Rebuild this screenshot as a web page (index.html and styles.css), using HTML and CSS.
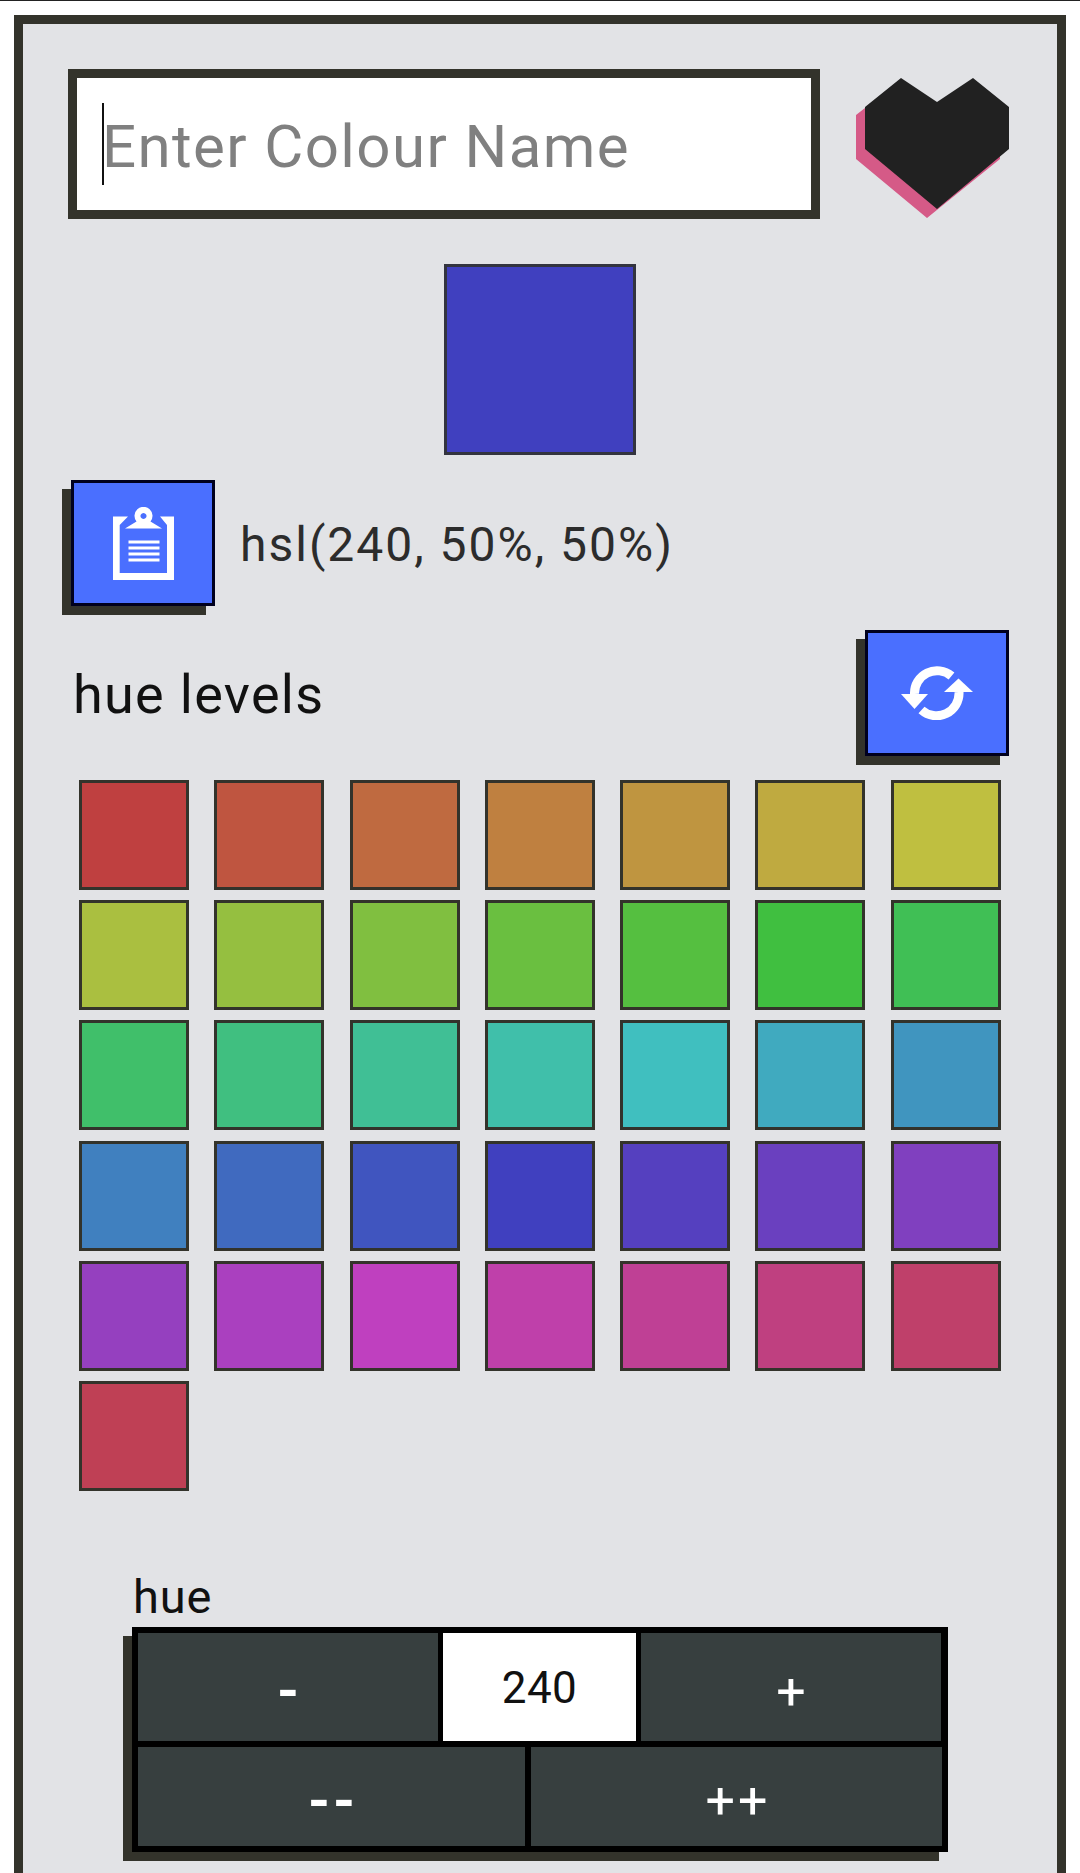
FILE: index.html
```html
<!DOCTYPE html>
<html lang="en">
<head>
    <meta charset="UTF-8">
    <meta name="viewport" content="width=device-width, initial-scale=1.0">
    <title>Colour Picker</title>
    <link rel="stylesheet" href="styles.css">
</head>
<body>
    <div class="panel">
        <!-- Name input and favourite -->
        <div class="header">
            <div class="name-box">
                <input class="name-input" type="text" placeholder="Enter Colour Name">
                <span class="caret"></span>
            </div>
            <svg class="heart" viewBox="0 0 153 141" aria-hidden="true">
                <polygon fill="#d55a87" points="36,9 71,33 107,9 144,37 144,81 71,140 0,81 0,37"/>
                <polygon fill="#212121" points="45,0 81,24 117,0 153,29 153,71 81,131 9,71 9,29"/>
            </svg>
        </div>

        <div class="preview"></div>

        <div class="copy-row">
            <button class="icon-btn" type="button" aria-label="Copy">
                <svg class="icon-clip" viewBox="0 0 61 73" aria-hidden="true">
                    <path fill="#fff" fill-rule="evenodd" d="M0 9.5H15L6.7 18V66H54V18L47 9.5H61V73H0Z"/>
                    <path fill="#fff" fill-rule="evenodd" d="M12 21.5L23.500 14.500A9 9 0 1 1 37.500 14.500L49 21.5ZM30.500 6a3 3 0 1 0 0.01 0Z"/>
                    <rect fill="#fff" x="15.500" y="33.500" width="31" height="3"/>
                    <rect fill="#fff" x="15.500" y="39.500" width="31" height="3"/>
                    <rect fill="#fff" x="15.500" y="45.500" width="31" height="3"/>
                    <rect fill="#fff" x="15.500" y="51.500" width="31" height="3"/>
                </svg>
            </button>
            <span class="hsl-text">hsl(240, 50%, 50%)</span>
        </div>

        <div class="levels-row">
            <span class="levels-title">hue levels</span>
            <button class="icon-btn" type="button" aria-label="Refresh">
                <svg class="icon-sync" viewBox="0 0 72 54" aria-hidden="true">
                    <path fill="none" stroke="#fff" stroke-width="9" d="M13.500 28A22.500 22.500 0 0 1 50.500 10"/>
                    <path fill="none" stroke="#fff" stroke-width="9" d="M58 26A22.500 22.500 0 0 1 20.500 44"/>
                    <polygon fill="#fff" points="0,28 27,28 13.500,43"/>
                    <polygon fill="#fff" points="57.500,12.500 72,26 43,26"/>
                </svg>
            </button>
        </div>

        <div class="swatches">
            <div class="swatch" style="background:hsl(0,50%,50%)"></div>
            <div class="swatch" style="background:hsl(10,50%,50%)"></div>
            <div class="swatch" style="background:hsl(20,50%,50%)"></div>
            <div class="swatch" style="background:hsl(30,50%,50%)"></div>
            <div class="swatch" style="background:hsl(40,50%,50%)"></div>
            <div class="swatch" style="background:hsl(50,50%,50%)"></div>
            <div class="swatch" style="background:hsl(60,50%,50%)"></div>
            <div class="swatch" style="background:hsl(70,50%,50%)"></div>
            <div class="swatch" style="background:hsl(80,50%,50%)"></div>
            <div class="swatch" style="background:hsl(90,50%,50%)"></div>
            <div class="swatch" style="background:hsl(100,50%,50%)"></div>
            <div class="swatch" style="background:hsl(110,50%,50%)"></div>
            <div class="swatch" style="background:hsl(120,50%,50%)"></div>
            <div class="swatch" style="background:hsl(130,50%,50%)"></div>
            <div class="swatch" style="background:hsl(140,50%,50%)"></div>
            <div class="swatch" style="background:hsl(150,50%,50%)"></div>
            <div class="swatch" style="background:hsl(160,50%,50%)"></div>
            <div class="swatch" style="background:hsl(170,50%,50%)"></div>
            <div class="swatch" style="background:hsl(180,50%,50%)"></div>
            <div class="swatch" style="background:hsl(190,50%,50%)"></div>
            <div class="swatch" style="background:hsl(200,50%,50%)"></div>
            <div class="swatch" style="background:hsl(210,50%,50%)"></div>
            <div class="swatch" style="background:hsl(220,50%,50%)"></div>
            <div class="swatch" style="background:hsl(230,50%,50%)"></div>
            <div class="swatch" style="background:hsl(240,50%,50%)"></div>
            <div class="swatch" style="background:hsl(250,50%,50%)"></div>
            <div class="swatch" style="background:hsl(260,50%,50%)"></div>
            <div class="swatch" style="background:hsl(270,50%,50%)"></div>
            <div class="swatch" style="background:hsl(280,50%,50%)"></div>
            <div class="swatch" style="background:hsl(290,50%,50%)"></div>
            <div class="swatch" style="background:hsl(300,50%,50%)"></div>
            <div class="swatch" style="background:hsl(310,50%,50%)"></div>
            <div class="swatch" style="background:hsl(320,50%,50%)"></div>
            <div class="swatch" style="background:hsl(330,50%,50%)"></div>
            <div class="swatch" style="background:hsl(340,50%,50%)"></div>
            <div class="swatch" style="background:hsl(350,50%,50%)"></div>
        </div>

        <!-- Hue stepper -->
        <div class="hue-label">hue</div>
        <div class="stepper">
            <div class="stepper-top">
                <button class="step-btn step-dash" type="button">-</button>
                <div class="step-value">240</div>
                <button class="step-btn" type="button">+</button>
            </div>
            <div class="stepper-bottom">
                <button class="step-btn step-dash step-minus" type="button">--</button>
                <button class="step-btn step-plus" type="button">++</button>
            </div>
        </div>
    </div>
</body>
</html>
```

FILE: styles.css
```css
/* Page */
html, body {
    height: 100%;
}
body {
    margin: 0;
    box-sizing: border-box;
    padding: 14px 14px 0;
    background: #fff;
    border-top: 1px solid #222;
    font-family: Roboto, "Liberation Sans", sans-serif;
    color: #111;
}
.panel {
    box-sizing: border-box;
    height: 100%;
    padding: 45px 45px 0;
    background: #e2e3e6;
    border: 9px solid #33332b;
    border-bottom: none;
}

/* Header */
.header {
    display: flex;
    justify-content: space-between;
    align-items: flex-start;
    padding-right: 3px;
}
.name-box {
    position: relative;
    width: 752px;
    height: 150px;
}
.name-input {
    box-sizing: border-box;
    display: block;
    width: 100%;
    height: 100%;
    padding: 5px 0 0 25px;
    background: #fff;
    border: 9px solid #33332b;
    border-radius: 0;
    outline: none;
    font-family: Roboto, sans-serif;
    font-size: 60px;
    letter-spacing: 1.400px;
}
.name-input::placeholder {
    color: #808080;
    opacity: 1;
}
.caret {
    position: absolute;
    left: 34px;
    top: 34px;
    width: 2px;
    height: 82px;
    background: #111;
}
.heart {
    display: block;
    width: 153px;
    height: 141px;
    margin-top: 9px;
}

/* Big colour preview */
.preview {
    box-sizing: border-box;
    width: 192px;
    height: 191px;
    margin: 45px auto 0;
    background: hsl(240, 50%, 50%);
    border: 3px solid #33343f;
}

/* Blue icon buttons */
.icon-btn {
    box-sizing: border-box;
    display: flex;
    justify-content: center;
    align-items: center;
    flex-shrink: 0;
    width: 144px;
    height: 126px;
    padding: 0;
    background: #4a6fff;
    border: 3px solid #00001e;
    box-shadow: -9px 9px 0 #33332b;
}
.icon-clip {
    width: 61px;
    height: 73px;
}
.icon-sync {
    width: 72px;
    height: 54px;
}
.copy-row {
    display: flex;
    align-items: center;
    gap: 25px;
    margin: 25px 0 0 3px;
}
.hsl-text {
    padding-top: 2px;
    font-size: 48px;
    letter-spacing: 2px;
    color: #2c2c2c;
}
.levels-row {
    display: flex;
    justify-content: space-between;
    align-items: center;
    margin-top: 24px;
    padding: 0 3px 0 5px;
}
.levels-title {
    padding-top: 2px;
    font-size: 54px;
    letter-spacing: 1.300px;
    color: #111;
}

/* Hue swatches */
.swatches {
    display: grid;
    grid-template-columns: repeat(7, 110px);
    grid-auto-rows: 110px;
    column-gap: 25.300px;
    row-gap: 10.200px;
    margin: 24px 0 0 11px;
}
.swatch {
    box-sizing: border-box;
    border: 3px solid #33332b;
}

/* Stepper */
.hue-label {
    margin: 76px 0 0 65px;
    font-size: 47px;
    line-height: 60px;
    letter-spacing: 0.800px;
    color: #111;
}
.stepper {
    box-sizing: border-box;
    display: flex;
    flex-direction: column;
    gap: 6px;
    width: 816px;
    height: 225px;
    margin-left: 64px;
    background: #000;
    border: 6px solid #000;
    box-shadow: -9px 9px 0 #33332b;
}
.stepper-top {
    display: grid;
    grid-template-columns: 300px 193px 300px;
    column-gap: 5px;
    height: 108px;
}
.stepper-bottom {
    display: grid;
    grid-template-columns: 387px 411px;
    column-gap: 6px;
    flex: 1;
}
.step-btn {
    padding: 9px 0 0;
    background: #373f3f;
    border: none;
    color: #fff;
    font-family: Roboto, sans-serif;
    font-size: 52px;
    font-weight: 400;
}
.step-dash {
    font-size: 56px;
    font-weight: 700;
}
.step-minus {
    letter-spacing: 3px;
    text-indent: 3px;
}
.step-plus {
    letter-spacing: 3px;
    text-indent: 3px;
}
.step-value {
    display: flex;
    justify-content: center;
    align-items: center;
    padding-top: 3px;
    background: #fff;
    font-size: 44px;
    letter-spacing: 0.500px;
    color: #111;
}
```
